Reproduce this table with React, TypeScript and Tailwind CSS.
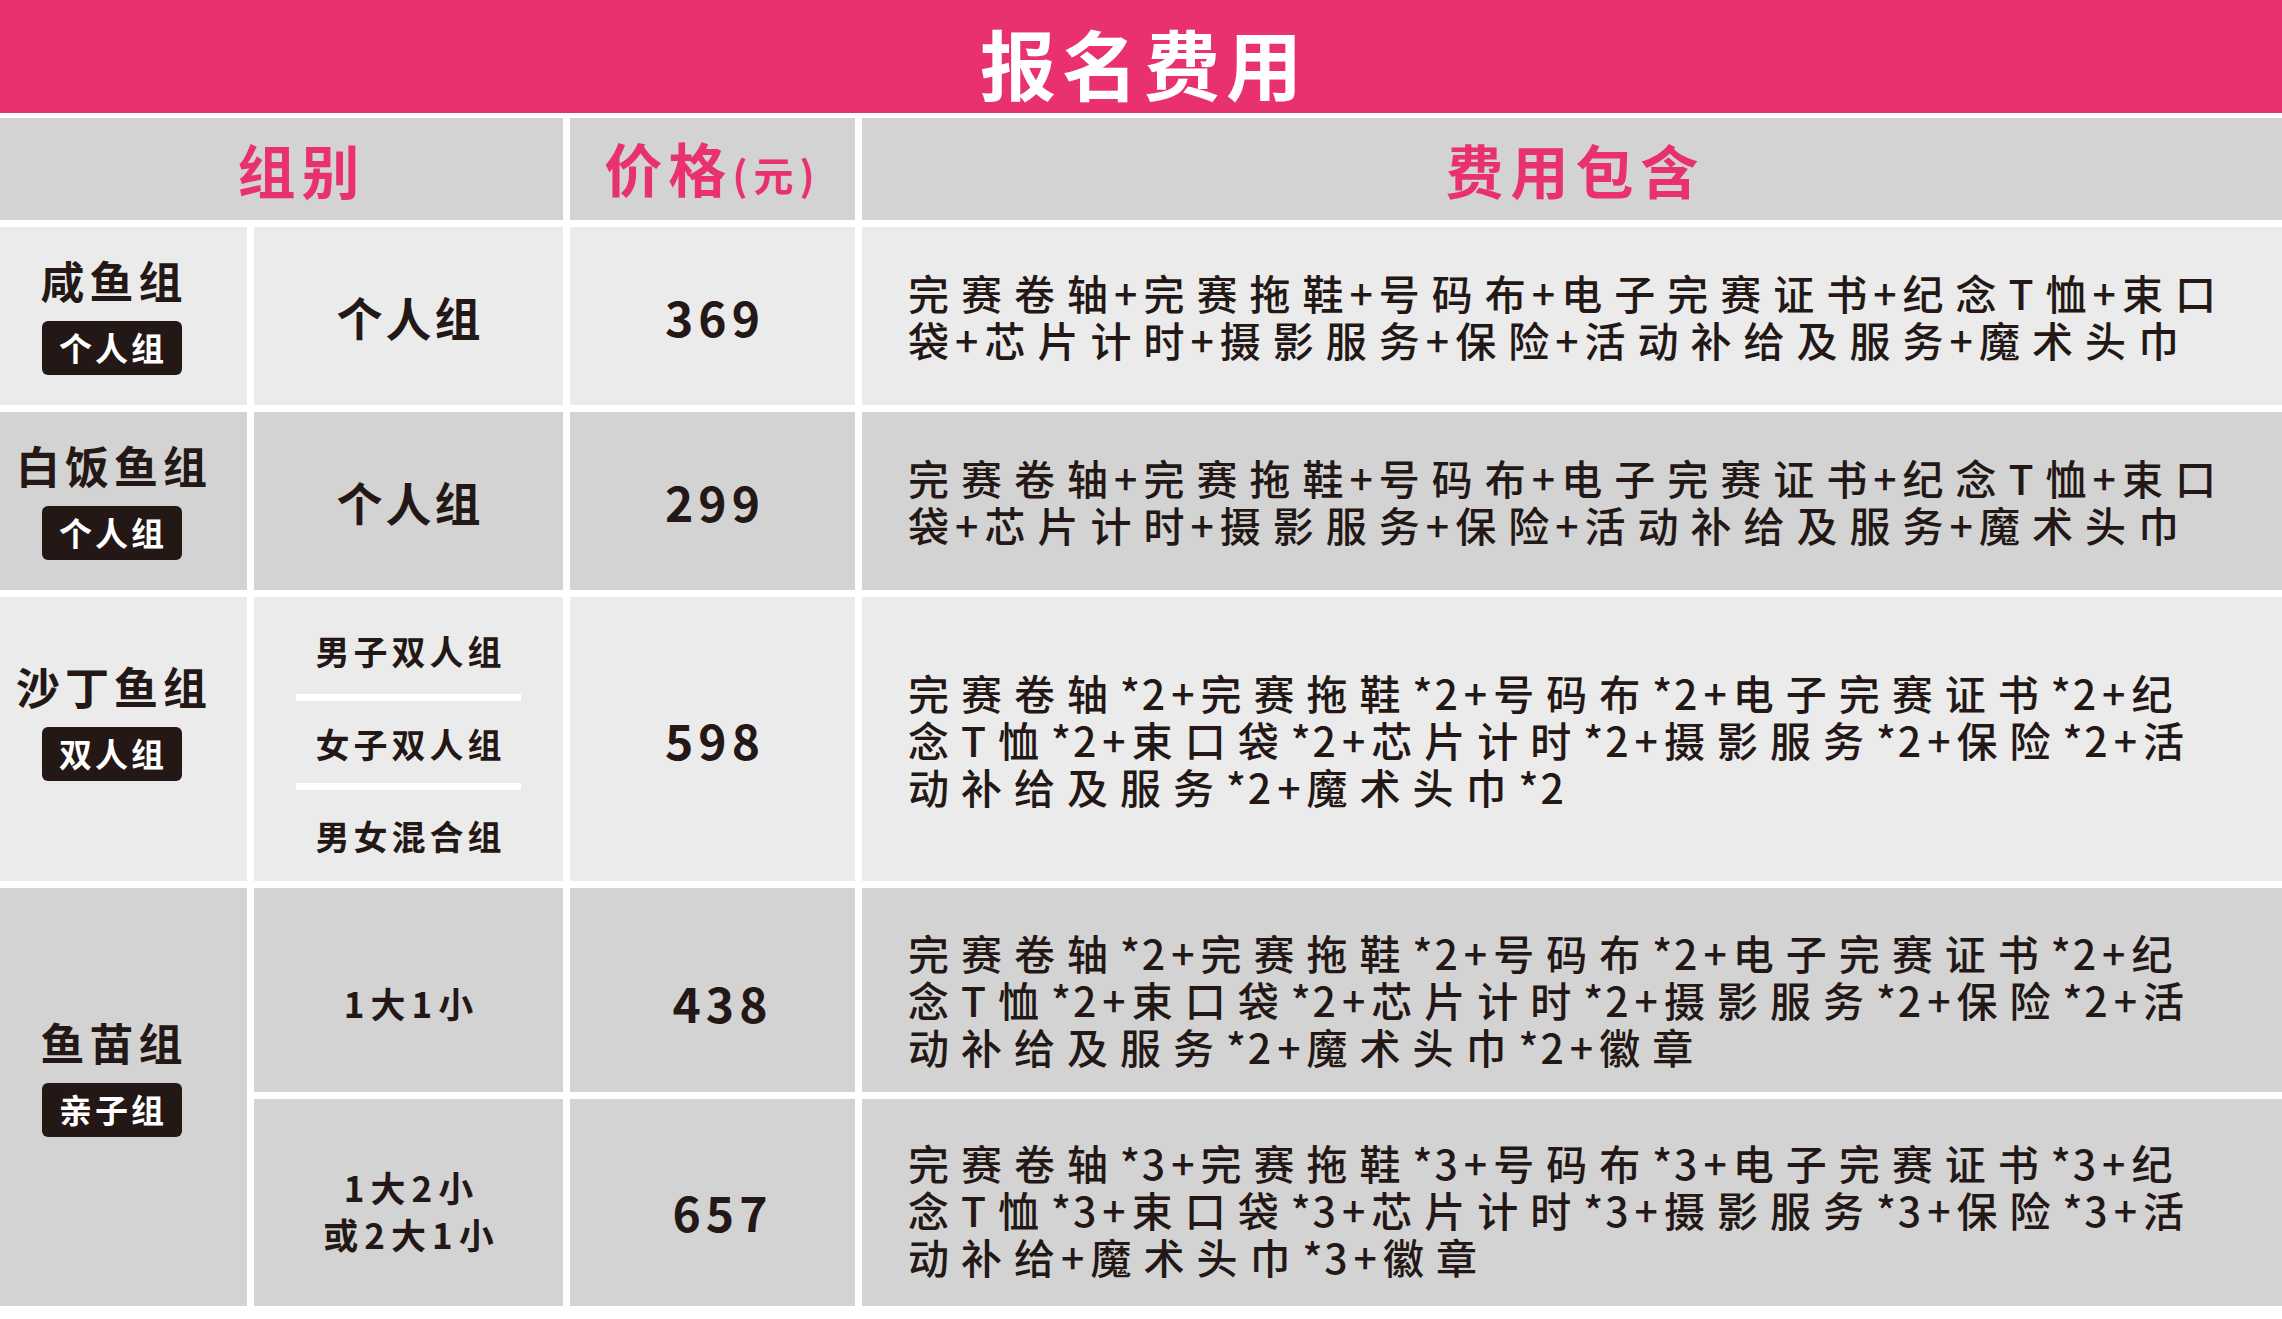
import React from "react";

const light = "bg-[#ebebeb]";
const dark = "bg-[#d3d3d3]";

function Badge({ children }: { children: React.ReactNode }) {
  return (
    <div className="mt-[19px] flex h-[54px] w-[140px] items-center justify-center rounded-[6px] bg-[#231815] pl-[3px] text-[33px] font-bold leading-none tracking-[3px] text-white">
      {children}
    </div>
  );
}

function Group({ name, badge, className }: { name: string; badge: string; className: string }) {
  return (
    <div className={`flex flex-col items-center justify-center pr-[24px] ${className}`}>
      <div className="pl-[5px] text-[44px] font-bold leading-none tracking-[5px]">{name}</div>
      <Badge>{badge}</Badge>
    </div>
  );
}

function Price({ value, className }: { value: string; className: string }) {
  return (
    <div className={`flex items-center justify-center pl-[5px] text-[48px] font-semibold leading-none tracking-[5px] ${className}`}>
      {value}
    </div>
  );
}

// 加号和星号字距收紧，和原图一样窄
function Line({ text }: { text: string }) {
  const chars = Array.from(text);
  return (
    <div className="whitespace-nowrap">
      {chars.map((c, i) =>
        c === "+" ? (
          <span key={i} className="-ml-[6px] tracking-[6px]">
            +
          </span>
        ) : c === "*" ? (
          <span key={i} className="tracking-[2px]">
            *
          </span>
        ) : (
          <React.Fragment key={i}>{c}</React.Fragment>
        )
      )}
    </div>
  );
}

function Fee({ lines, className }: { lines: string[]; className: string }) {
  return (
    <div className={`flex flex-col justify-center pl-[46px] text-[41px] font-medium leading-[47px] tracking-[12px] ${className}`}>
      {lines.map((l, i) => (
        <Line key={i} text={l} />
      ))}
    </div>
  );
}

export default function App() {
  return (
    <div className="h-[1319px] w-[2282px] bg-white font-['Noto_Sans_CJK_SC','Noto_Sans',sans-serif] text-[#231815]">
      <div className="flex h-[113px] items-center justify-center bg-[#e9316f] pl-[6px] pt-[10px] text-[76px] font-bold leading-none tracking-[6px] text-white">
        报名费用
      </div>

      <div className="mt-[5px] grid grid-cols-[247px_309px_285px_1fr] grid-rows-[102px_178px_178px_284px_204px_207px] gap-[7px]">
        {/* 表头 */}
        <div className={`col-span-2 flex items-center justify-center pl-[40px] text-[58px] font-bold leading-none tracking-[6px] text-[#e9316f] ${dark}`}>
          组别
        </div>
        <div className={`flex items-end justify-center pb-[24px] text-[#e9316f] ${dark}`}>
          <span className="text-[58px] font-bold leading-none tracking-[6px]">价格</span>
          <span className="pb-[2px] text-[40px] font-bold leading-none tracking-[6px]">(元)</span>
        </div>
        <div className={`flex items-center justify-center pl-[7px] text-[58px] font-bold leading-none tracking-[7px] text-[#e9316f] ${dark}`}>
          费用包含
        </div>

        {/* 咸鱼组 */}
        <Group name="咸鱼组" badge="个人组" className={light} />
        <div className={`flex items-center justify-center pl-[3px] text-[46px] font-bold leading-none tracking-[3px] ${light}`}>
          个人组
        </div>
        <Price value="369" className={light} />
        <Fee
          className={light}
          lines={["完赛卷轴+完赛拖鞋+号码布+电子完赛证书+纪念T恤+束口", "袋+芯片计时+摄影服务+保险+活动补给及服务+魔术头巾"]}
        />

        {/* 白饭鱼组 */}
        <Group name="白饭鱼组" badge="个人组" className={dark} />
        <div className={`flex items-center justify-center pl-[3px] text-[46px] font-bold leading-none tracking-[3px] ${dark}`}>
          个人组
        </div>
        <Price value="299" className={dark} />
        <Fee
          className={dark}
          lines={["完赛卷轴+完赛拖鞋+号码布+电子完赛证书+纪念T恤+束口", "袋+芯片计时+摄影服务+保险+活动补给及服务+魔术头巾"]}
        />

        {/* 沙丁鱼组 */}
        <Group name="沙丁鱼组" badge="双人组" className={`pb-[34px] ${light}`} />
        <div className={`flex flex-col items-center text-[34px] font-bold leading-none tracking-[4px] ${light}`}>
          <div className="flex h-[97px] items-center pl-[4px] pt-[10px]">男子双人组</div>
          <div className="h-[7px] w-[225px] bg-white" />
          <div className="flex h-[82px] items-center pl-[4px] pt-[4px]">女子双人组</div>
          <div className="h-[7px] w-[225px] bg-white" />
          <div className="flex h-[91px] items-center pl-[4px]">男女混合组</div>
        </div>
        <Price value="598" className={light} />
        <Fee
          className={light}
          lines={[
            "完赛卷轴*2+完赛拖鞋*2+号码布*2+电子完赛证书*2+纪",
            "念T恤*2+束口袋*2+芯片计时*2+摄影服务*2+保险*2+活",
            "动补给及服务*2+魔术头巾*2",
          ]}
        />

        {/* 鱼苗组 */}
        <Group name="鱼苗组" badge="亲子组" className={`row-span-2 pb-[38px] ${dark}`} />
        <div className={`flex items-center justify-center pl-[6px] pt-[24px] text-[35px] font-bold leading-none tracking-[6px] ${dark}`}>
          1大1小
        </div>
        <Price value="438" className={`pl-[20px] pt-[24px] ${dark}`} />
        <Fee
          className={`pt-[18px] ${dark}`}
          lines={[
            "完赛卷轴*2+完赛拖鞋*2+号码布*2+电子完赛证书*2+纪",
            "念T恤*2+束口袋*2+芯片计时*2+摄影服务*2+保险*2+活",
            "动补给及服务*2+魔术头巾*2+徽章",
          ]}
        />

        <div className={`flex flex-col items-center justify-center pl-[6px] pt-[14px] text-[35px] font-bold leading-[47px] tracking-[6px] ${dark}`}>
          <div>1大2小</div>
          <div>或2大1小</div>
        </div>
        <Price value="657" className={`pl-[20px] pt-[16px] ${dark}`} />
        <Fee
          className={`pt-[14px] ${dark}`}
          lines={[
            "完赛卷轴*3+完赛拖鞋*3+号码布*3+电子完赛证书*3+纪",
            "念T恤*3+束口袋*3+芯片计时*3+摄影服务*3+保险*3+活",
            "动补给+魔术头巾*3+徽章",
          ]}
        />
      </div>
    </div>
  );
}
